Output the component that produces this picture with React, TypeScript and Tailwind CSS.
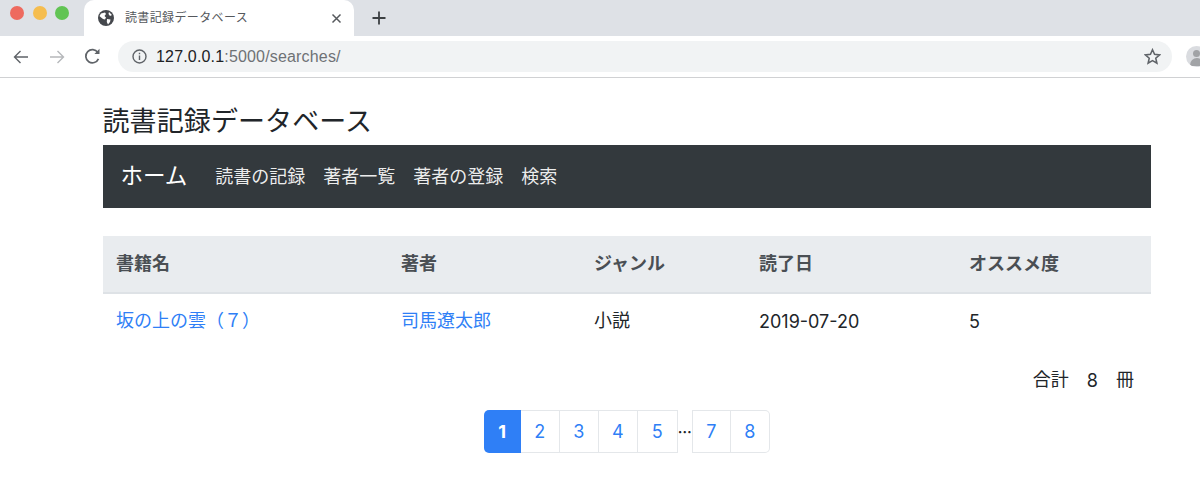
import React from "react";

function Globe() {
  return (
    <svg width="16" height="16" viewBox="0 0 16 16" className="shrink-0">
      <circle cx="8" cy="8" r="8" fill="#45484d" />
      <path d="M3 3.5 L7 2.5 L8 4 L6.5 6 L8 7.5 L7 9.5 L5 9 L2.5 7 L1.5 6 Z M9 9 L12.5 9.5 L12 12 L10 14.5 L8.8 12 Z M11 2 L14 5 L12 6 L10.5 4 Z" fill="#ffffff" />
    </svg>
  );
}

const pageClass = "flex items-center justify-center h-full border-y border-r border-[#e4e7ea] text-[#2f7ff6] bg-white font-['Inter',sans-serif]";

export default function App() {
  return (
    <div className="w-[1200px] h-[489px] overflow-hidden bg-white text-[18px] text-[#212529] font-['Liberation_Sans','Noto_Sans_CJK_JP',sans-serif]">
      {/* tab strip */}
      <div className="flex h-9 bg-[#dee1e6]">
        <div className="flex items-center gap-[8.5px] w-[84px] pl-[10px] pb-[10px]">
          <span className="w-[14px] h-[14px] rounded-full bg-[#ee6a5f]" />
          <span className="w-[14px] h-[14px] rounded-full bg-[#f5bd4f]" />
          <span className="w-[14px] h-[14px] rounded-full bg-[#61c454]" />
        </div>
        <div className="flex items-center w-[270px] rounded-t-[10px] bg-white pl-[14px] pr-[12px]">
          <Globe />
          <span className="ml-[11px] text-[12px] text-[#55585c] tracking-[0.03em] whitespace-nowrap">読書記録データベース</span>
          <svg width="11" height="11" viewBox="0 0 11 11" className="ml-auto" stroke="#55585c" strokeWidth="1.5">
            <path d="M1.5 1.5 L9.5 9.5 M9.5 1.5 L1.5 9.5" />
          </svg>
        </div>
        <div className="flex items-center pl-[18px]">
          <svg width="14" height="14" viewBox="0 0 14 14" stroke="#3c4043" strokeWidth="1.8">
            <path d="M7 0.5 V13.5 M0.5 7 H13.5" />
          </svg>
        </div>
      </div>
      {/* toolbar */}
      <div className="flex items-center h-[42px] border-b border-[#d0d1d3] bg-white">
        <div className="flex items-center w-[118px] pl-[13px]">
          <svg width="16" height="16" viewBox="0 0 16 16" fill="none" stroke="#5f6368" strokeWidth="1.4">
            <path d="M15 8 H1.5 M7.5 2 L1.5 8 L7.5 14" />
          </svg>
          <svg width="16" height="16" viewBox="0 0 16 16" fill="none" stroke="#b6b8bb" strokeWidth="1.4" className="ml-[20px]">
            <path d="M1 8 H14.5 M8.5 2 L14.5 8 L8.5 14" />
          </svg>
          <svg width="17" height="17" viewBox="0 0 16 16" fill="none" stroke="#5f6368" strokeWidth="1.6" className="ml-[19px]">
            <path d="M13.6 10.2 A6.2 6.2 0 1 1 13 4.2" />
            <path d="M14.6 0.8 V5.6 H9.8 Z" fill="#5f6368" stroke="none" />
          </svg>
        </div>
        <div className="flex items-center w-[1054px] h-[31px] rounded-full bg-[#f1f3f4] pl-[14px] pr-[11px]">
          <svg width="15" height="15" viewBox="0 0 15 15" fill="none" stroke="#5f6368" strokeWidth="1.4">
            <circle cx="7.5" cy="7.5" r="6.5" />
            <path d="M7.5 6.5 V11 M7.5 3.8 V5.2" />
          </svg>
          <span className="ml-[9px] text-[16px] tracking-[0.17px] text-[#202124] whitespace-nowrap">
            127.0.0.1<span className="text-[#6e7175]">:5000/searches/</span>
          </span>
          <svg width="17" height="17" viewBox="0 0 24 24" fill="none" stroke="#5f6368" strokeWidth="2.2" className="ml-auto">
            <path d="M12 2.5 L14.9 9 L22 9.7 L16.6 14.4 L18.2 21.4 L12 17.8 L5.8 21.4 L7.4 14.4 L2 9.7 L9.1 9 Z" />
          </svg>
        </div>
        <div className="ml-[14px] w-[14px] h-[21px] overflow-hidden">
          <div className="w-[21px] h-[21px] rounded-full bg-[#dadce0] overflow-hidden flex flex-col items-center">
            <span className="mt-[4px] w-[7px] h-[7px] rounded-full bg-[#a1a3a6]" />
            <span className="mt-[1px] w-[14px] h-[8px] rounded-t-full bg-[#a1a3a6]" />
          </div>
        </div>
      </div>
      {/* page */}
      <div className="mx-[102.5px] w-[1048.5px]">
        <h1 className="h-[67px] pt-[26px] text-[27px] tracking-[0.1px] leading-[36px] text-[#212529] whitespace-nowrap">読書記録データベース</h1>
        <nav className="flex items-center h-[63px] pl-[18px] pt-[2px] bg-[#33393d] text-white">
          <span className="text-[22.5px] leading-none">ホーム</span>
          <div className="flex gap-[18px] ml-[28px] text-[rgba(255,255,255,0.92)]">
            <span>読書の記録</span>
            <span>著者一覧</span>
            <span>著者の登録</span>
            <span>検索</span>
          </div>
        </nav>
        <table className="mt-[28px] w-full table-fixed border-collapse">
          <colgroup>
            <col className="w-[285px]" />
            <col className="w-[193px]" />
            <col className="w-[165px]" />
            <col className="w-[210px]" />
            <col />
          </colgroup>
          <thead>
            <tr className="h-[57px] bg-[#e9ecef] border-b-2 border-[#dee2e6] text-[#4a4f54] text-left">
              <th className="pl-[13.5px] font-bold">書籍名</th>
              <th className="pl-[13.5px] font-bold">著者</th>
              <th className="pl-[13.5px] font-bold">ジャンル</th>
              <th className="pl-[13.5px] font-bold">読了日</th>
              <th className="pl-[13.5px] font-bold">オススメ度</th>
            </tr>
          </thead>
          <tbody>
            <tr className="h-[55px]">
              <td className="pl-[13.5px] text-[#2f7ff6]">坂の上の雲（７）</td>
              <td className="pl-[13.5px] text-[#2f7ff6]">司馬遼太郎</td>
              <td className="pl-[13.5px]">小説</td>
              <td className="pl-[13.5px] font-['Inter',sans-serif]">2019-07-20</td>
              <td className="pl-[13.5px] font-['Inter',sans-serif]">5</td>
            </tr>
          </tbody>
        </table>
        <div className="flex justify-end gap-[18px] mt-[19px] pr-[17px] h-[26px] items-center">
          <span>合計</span>
          <span className="font-['Inter',sans-serif]">8</span>
          <span>冊</span>
        </div>
        <div className="flex justify-center mt-[17px] h-[43px]">
          <div className="flex h-full">
            <span className="flex items-center justify-center w-[37px] h-full rounded-l-[5px] bg-[#2f7ff6] text-white font-bold font-['Inter',sans-serif]">1</span>
            <span className={`${pageClass} w-[39px]`}>2</span>
            <span className={`${pageClass} w-[39px]`}>3</span>
            <span className={`${pageClass} w-[39px]`}>4</span>
            <span className={`${pageClass} w-[40px]`}>5</span>
            <span className="flex items-center justify-center w-[14px] h-full text-[14px] font-bold font-['Noto_Sans_CJK_JP',sans-serif]">…</span>
            <span className={`${pageClass} w-[39px] border-l`}>7</span>
            <span className={`${pageClass} w-[39px] rounded-r-[5px]`}>8</span>
          </div>
        </div>
      </div>
    </div>
  );
}
